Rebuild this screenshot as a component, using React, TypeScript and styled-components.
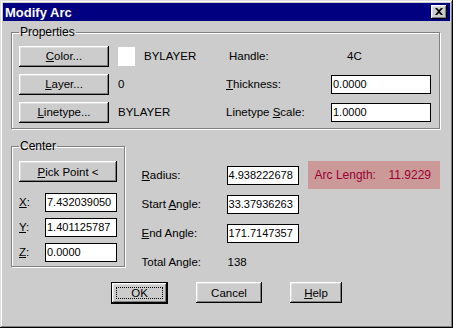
import React, { FunctionComponent, ReactNode } from 'react';
import styled, { createGlobalStyle } from 'styled-components';

const GlobalStyle = createGlobalStyle`
  html, body {
    margin: 0;
    padding: 0;
    background: #cccccc;
  }

  body {
    font-family: 'Liberation Sans', Arial, sans-serif;
    font-size: 11px;
    color: #000;
  }
`;

const Window = styled.div`
  width: 453px;
  height: 328px;
  box-sizing: border-box;
  padding: 3px;
  background: #cccccc;
  box-shadow: inset -1px -1px 0 #000, inset 1px 1px 0 #dfdfdf, inset -2px -2px 0 #808080, inset 2px 2px 0 #fff;
  display: flex;
  flex-direction: column;
`;

const TitleBar = styled.div`
  height: 18px;
  background: #000080;
  display: flex;
  align-items: center;
  justify-content: space-between;
  padding: 0 3px 0 2px;
  color: #fff;
  font-weight: bold;
  font-size: 13px;
`;

const CloseButton = styled.div`
  width: 16px;
  height: 14px;
  box-sizing: border-box;
  background: #cccccc;
  box-shadow: inset -1px -1px 0 #000, inset 1px 1px 0 #fff, inset -2px -2px 0 #808080, inset 2px 2px 0 #dfdfdf;
  display: flex;
  align-items: center;
  justify-content: center;
  padding: 0 1px 1px 0;
`;

const Body = styled.div`
  padding: 0 10px 0 8px;
  display: flex;
  flex-direction: column;
`;

const Group = styled.fieldset<{ $width?: number }>`
  margin: 0;
  min-inline-size: 0;
  border: 1px solid #808080;
  box-shadow: 1px 1px 0 #fff, inset 1px 1px 0 #fff;
  padding: 7px 7px 6px 7px;
  box-sizing: border-box;
  width: ${(p) => (p.$width ? `${p.$width}px` : 'auto')};

  legend {
    padding: 0 1px;
    line-height: 13px;
    font-size: 12px;
  }
`;

const PropertiesGroup = styled(Group)`
  margin-top: 5px;
`;

const PropGrid = styled.div`
  display: grid;
  grid-template-columns: 99px 108px 105px 100px;
  grid-auto-rows: 20px;
  row-gap: 8px;
  align-items: center;
`;

const Button = styled.button<{ $width: number; $default?: boolean }>`
  width: ${(p) => p.$width}px;
  height: ${(p) => (p.$default ? 22 : 21)}px;
  box-sizing: border-box;
  padding: 0;
  background: #cccccc;
  font-family: inherit;
  font-size: 11.5px;
  color: #000;
  border: ${(p) => (p.$default ? '1px solid #000' : 'none')};
  box-shadow: inset -1px -1px 0 #000, inset 1px 1px 0 #fff, inset -2px -2px 0 #808080, inset 2px 2px 0 #dfdfdf;
  display: flex;
  align-items: center;
  justify-content: center;
`;

const FocusRing = styled.span`
  display: flex;
  align-items: center;
  justify-content: center;
  width: calc(100% - 8px);
  height: calc(100% - 8px);
  border: 1px dotted #000;
  box-sizing: border-box;
`;

const Swatch = styled.div`
  width: 17px;
  height: 19px;
  background: #fff;
`;

const ValueRow = styled.div`
  display: flex;
  align-items: center;
  gap: 9px;
`;

const Text = styled.span<{ $indent?: number }>`
  white-space: nowrap;
  font-size: 11.5px;
  padding-left: ${(p) => p.$indent || 0}px;
`;

const Input = styled.div<{ $width: number }>`
  width: ${(p) => p.$width}px;
  height: 19px;
  box-sizing: border-box;
  background: #fff;
  border: 1px solid #000;
  padding-left: 1px;
  display: flex;
  align-items: center;
  font-size: 11px;
  white-space: nowrap;
  overflow: hidden;
`;

const LowerRow = styled.div`
  display: flex;
  align-items: flex-start;
  margin-top: 11px;
`;

const CenterGroup = styled(Group)`
  padding: 8px 7px 4px 7px;
`;

const CoordGrid = styled.div`
  display: grid;
  grid-template-columns: 26px 72px;
  grid-auto-rows: 20px;
  row-gap: 5px;
  align-items: center;
  margin-top: 10px;
`;

const FieldGrid = styled.div`
  display: grid;
  grid-template-columns: 85px 72px;
  grid-auto-rows: 20px;
  row-gap: 9px;
  align-items: center;
  margin: 25px 0 0 17px;
`;

const ArcBox = styled.div`
  width: 133px;
  height: 28px;
  box-sizing: border-box;
  margin: 21px 0 0 9px;
  padding: 0 9px 0 7px;
  background: #cc9999;
  color: #990033;
  display: flex;
  align-items: center;
  justify-content: space-between;
  font-size: 12px;
`;

const ButtonRow = styled.div`
  display: flex;
  justify-content: center;
  gap: 28px;
  margin-top: 10px;
  padding-left: 2px;
`;

const Key: FunctionComponent<{ children: ReactNode }> = ({ children }) => (
  <span style={{ textDecoration: 'underline' }}>{children}</span>
);

const App: FunctionComponent = () => (
  <>
    <GlobalStyle />
    <Window>
      <TitleBar>
        <span>Modify Arc</span>
        <CloseButton>
          <svg width="8" height="7" viewBox="0 0 8 7">
            <path d="M0 0h2l2 2 2-2h2L5 3.5 8 7H6L4 5 2 7H0l3-3.5z" fill="#000" />
          </svg>
        </CloseButton>
      </TitleBar>
      <Body>
        <PropertiesGroup>
          <legend>Properties</legend>
          <PropGrid>
            <Button $width={90}>
              <Key>C</Key>olor...
            </Button>
            <ValueRow>
              <Swatch />
              <Text>BYLAYER</Text>
            </ValueRow>
            <Text $indent={3}>Handle:</Text>
            <Text $indent={16}>4C</Text>

            <Button $width={90}>
              <Key>L</Key>ayer...
            </Button>
            <Text>0</Text>
            <Text>
              <Key>T</Key>hickness:
            </Text>
            <Input $width={100}>0.0000</Input>

            <Button $width={90}>
              <Key>L</Key>inetype...
            </Button>
            <Text>BYLAYER</Text>
            <Text>
              Linetype <Key>S</Key>cale:
            </Text>
            <Input $width={100}>1.0000</Input>
          </PropGrid>
        </PropertiesGroup>

        <LowerRow>
          <CenterGroup $width={114}>
            <legend>Center</legend>
            <Button $width={98}>
              <Key>P</Key>ick Point &lt;
            </Button>
            <CoordGrid>
              <Text>
                <Key>X</Key>:
              </Text>
              <Input $width={72}>7.432039050</Input>
              <Text>
                <Key>Y</Key>:
              </Text>
              <Input $width={72}>1.401125787</Input>
              <Text>
                <Key>Z</Key>:
              </Text>
              <Input $width={72}>0.0000</Input>
            </CoordGrid>
          </CenterGroup>

          <FieldGrid>
            <Text>
              <Key>R</Key>adius:
            </Text>
            <Input $width={72}>4.938222678</Input>
            <Text>
              Start <Key>A</Key>ngle:
            </Text>
            <Input $width={72}>33.37936263</Input>
            <Text>
              <Key>E</Key>nd Angle:
            </Text>
            <Input $width={72}>171.7147357</Input>
            <Text>Total Angle:</Text>
            <Text $indent={1}>138</Text>
          </FieldGrid>

          <ArcBox>
            <span>Arc Length:</span>
            <span>11.9229</span>
          </ArcBox>
        </LowerRow>

        <ButtonRow>
          <Button $width={57} $default>
            <FocusRing>OK</FocusRing>
          </Button>
          <Button $width={66}>Cancel</Button>
          <Button $width={52}>
            <Key>H</Key>elp
          </Button>
        </ButtonRow>
      </Body>
    </Window>
  </>
);

export default App;
